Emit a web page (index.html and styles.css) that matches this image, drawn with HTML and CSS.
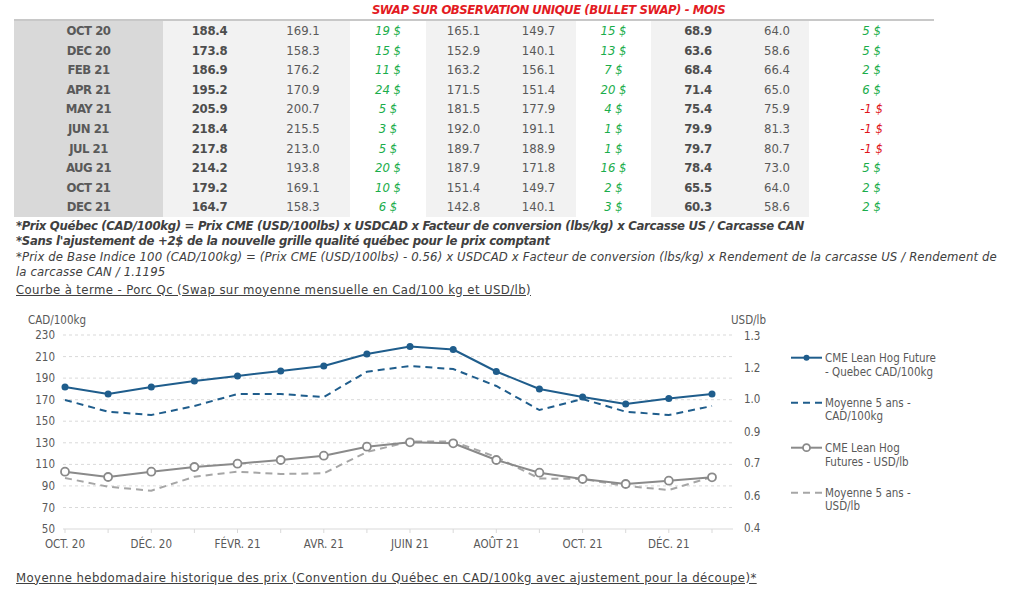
FILE: index.html
```html
<!DOCTYPE html>
<html lang="fr">
<head>
<meta charset="utf-8">
<title>Swap porc</title>
<link rel="stylesheet" href="styles.css">
</head>
<body>
<div class="page">
  <table class="swap">
    <colgroup>
      <col class="c-label"><col class="c-a"><col class="c-b"><col class="c-c"><col class="c-d"><col class="c-e"><col class="c-f"><col class="c-g"><col class="c-h"><col class="c-i">
    </colgroup>
    <thead>
      <tr><th></th><th colspan="9" class="title">SWAP SUR OBSERVATION UNIQUE (BULLET SWAP) - MOIS</th></tr>
    </thead>
    <tbody>
      <tr><td class="lbl">OCT 20</td><td class="b">188.4</td><td>169.1</td><td class="up">19 $</td><td>165.1</td><td>149.7</td><td class="up">15 $</td><td class="b">68.9</td><td>64.0</td><td class="up">5 $</td></tr>
      <tr><td class="lbl">DEC 20</td><td class="b">173.8</td><td>158.3</td><td class="up">15 $</td><td>152.9</td><td>140.1</td><td class="up">13 $</td><td class="b">63.6</td><td>58.6</td><td class="up">5 $</td></tr>
      <tr><td class="lbl">FEB 21</td><td class="b">186.9</td><td>176.2</td><td class="up">11 $</td><td>163.2</td><td>156.1</td><td class="up">7 $</td><td class="b">68.4</td><td>66.4</td><td class="up">2 $</td></tr>
      <tr><td class="lbl">APR 21</td><td class="b">195.2</td><td>170.9</td><td class="up">24 $</td><td>171.5</td><td>151.4</td><td class="up">20 $</td><td class="b">71.4</td><td>65.0</td><td class="up">6 $</td></tr>
      <tr><td class="lbl">MAY 21</td><td class="b">205.9</td><td>200.7</td><td class="up">5 $</td><td>181.5</td><td>177.9</td><td class="up">4 $</td><td class="b">75.4</td><td>75.9</td><td class="down">-1 $</td></tr>
      <tr><td class="lbl">JUN 21</td><td class="b">218.4</td><td>215.5</td><td class="up">3 $</td><td>192.0</td><td>191.1</td><td class="up">1 $</td><td class="b">79.9</td><td>81.3</td><td class="down">-1 $</td></tr>
      <tr><td class="lbl">JUL 21</td><td class="b">217.8</td><td>213.0</td><td class="up">5 $</td><td>189.7</td><td>188.9</td><td class="up">1 $</td><td class="b">79.7</td><td>80.7</td><td class="down">-1 $</td></tr>
      <tr><td class="lbl">AUG 21</td><td class="b">214.2</td><td>193.8</td><td class="up">20 $</td><td>187.9</td><td>171.8</td><td class="up">16 $</td><td class="b">78.4</td><td>73.0</td><td class="up">5 $</td></tr>
      <tr><td class="lbl">OCT 21</td><td class="b">179.2</td><td>169.1</td><td class="up">10 $</td><td>151.4</td><td>149.7</td><td class="up">2 $</td><td class="b">65.5</td><td>64.0</td><td class="up">2 $</td></tr>
      <tr><td class="lbl">DEC 21</td><td class="b">164.7</td><td>158.3</td><td class="up">6 $</td><td>142.8</td><td>140.1</td><td class="up">3 $</td><td class="b">60.3</td><td>58.6</td><td class="up">2 $</td></tr>
    </tbody>
  </table>

  <div class="notes">
    <p class="note strong">*Prix Québec (CAD/100kg) = Prix CME (USD/100lbs) x USDCAD x Facteur de conversion (lbs/kg) x Carcasse US / Carcasse CAN</p>
    <p class="note strong">*Sans l'ajustement de +2$ de la nouvelle grille qualité québec pour le prix comptant</p>
    <p class="note">*Prix de Base Indice 100 (CAD/100kg) = (Prix CME (USD/100lbs) - 0.56) x USDCAD x Facteur de conversion (lbs/kg) x Rendement de la carcasse US / Rendement de<br>la carcasse CAN / 1.1195</p>
    <p class="heading">Courbe à terme - Porc Qc (Swap sur moyenne mensuelle en Cad/100 kg et USD/lb)</p>
  </div>
</div>

<svg class="chart" width="1024" height="264" viewBox="0 0 1024 264" xmlns="http://www.w3.org/2000/svg">
  <g class="grid">
    <line x1="63" y1="35" x2="733" y2="35"/>
    <line x1="63" y1="56.6" x2="733" y2="56.6"/>
    <line x1="63" y1="78.1" x2="733" y2="78.1"/>
    <line x1="63" y1="99.7" x2="733" y2="99.7"/>
    <line x1="63" y1="121.2" x2="733" y2="121.2"/>
    <line x1="63" y1="142.8" x2="733" y2="142.8"/>
    <line x1="63" y1="164.4" x2="733" y2="164.4"/>
    <line x1="63" y1="185.9" x2="733" y2="185.9"/>
    <line x1="63" y1="207.5" x2="733" y2="207.5"/>
  </g>
  <g class="axis">
    <line x1="63" y1="229" x2="733" y2="229"/>
    <path d="M65 229v4M108.1 229v4M151.3 229v4M194.4 229v4M237.5 229v4M280.7 229v4M323.8 229v4M366.9 229v4M410 229v4M453.2 229v4M496.3 229v4M539.4 229v4M582.6 229v4M625.7 229v4M668.8 229v4M712 229v4"/>
  </g>
  <g class="lab">
    <text x="28" y="24">CAD/100kg</text>
    <text x="731" y="24">USD/lb</text>
  </g>
  <g class="lab" text-anchor="end">
    <text x="55" y="39">230</text>
    <text x="55" y="60.6">210</text>
    <text x="55" y="82.1">190</text>
    <text x="55" y="103.7">170</text>
    <text x="55" y="125.2">150</text>
    <text x="55" y="146.8">130</text>
    <text x="55" y="168.4">110</text>
    <text x="55" y="189.9">90</text>
    <text x="55" y="211.5">70</text>
    <text x="55" y="233">50</text>
  </g>
  <g class="lab">
    <text x="744" y="40">1.3</text>
    <text x="744" y="71.7">1.2</text>
    <text x="744" y="103.3">1.0</text>
    <text x="744" y="135.7">0.9</text>
    <text x="744" y="167.3">0.7</text>
    <text x="744" y="200">0.6</text>
    <text x="744" y="231.7">0.4</text>
  </g>
  <g class="lab" text-anchor="middle">
    <text x="65" y="248">OCT. 20</text>
    <text x="151.3" y="248">DÉC. 20</text>
    <text x="237.5" y="248">FÉVR. 21</text>
    <text x="323.8" y="248">AVR. 21</text>
    <text x="410" y="248">JUIN 21</text>
    <text x="496.3" y="248">AOÛT 21</text>
    <text x="582.6" y="248">OCT. 21</text>
    <text x="668.8" y="248">DÉC. 21</text>
  </g>

  <polyline class="s-grey-dash" points="65,178 108.1,186.7 151.3,190.7 194.4,176.7 237.5,171.7 280.7,174 323.8,173.3 366.9,152 410,141.5 453.2,141.5 496.3,157 539.4,178.5 582.6,179 625.7,186 668.8,190 712,177"/>
  <polyline class="s-grey" points="65,171.7 108.1,177 151.3,171.7 194.4,167 237.5,163.7 280.7,160 323.8,155.7 366.9,146.7 410,142.3 453.2,143.3 496.3,160 539.4,172.7 582.6,179 625.7,184 668.8,180.7 712,177.3"/>
  <g class="m-grey">
    <circle cx="65" cy="171.7" r="4"/><circle cx="108.1" cy="177" r="4"/><circle cx="151.3" cy="171.7" r="4"/><circle cx="194.4" cy="167" r="4"/>
    <circle cx="237.5" cy="163.7" r="4"/><circle cx="280.7" cy="160" r="4"/><circle cx="323.8" cy="155.7" r="4"/><circle cx="366.9" cy="146.7" r="4"/>
    <circle cx="410" cy="142.3" r="4"/><circle cx="453.2" cy="143.3" r="4"/><circle cx="496.3" cy="160" r="4"/><circle cx="539.4" cy="172.7" r="4"/>
    <circle cx="582.6" cy="179" r="4"/><circle cx="625.7" cy="184" r="4"/><circle cx="668.8" cy="180.7" r="4"/><circle cx="712" cy="177.3" r="4"/>
  </g>

  <polyline class="s-blue-dash" points="65,100 108.1,111.7 151.3,115 194.4,106 237.5,94 280.7,94 323.8,97 366.9,71.7 410,66 453.2,69 496.3,86 539.4,110 582.6,99 625.7,111.7 668.8,115 712,106"/>
  <polyline class="s-blue" points="65,87 108.1,94 151.3,87 194.4,81 237.5,76 280.7,71 323.8,66 366.9,54 410,46.5 453.2,49.5 496.3,71.5 539.4,89 582.6,97 625.7,104 668.8,98.5 712,94"/>
  <g class="m-blue">
    <circle cx="65" cy="87" r="3.5"/><circle cx="108.1" cy="94" r="3.5"/><circle cx="151.3" cy="87" r="3.5"/><circle cx="194.4" cy="81" r="3.5"/>
    <circle cx="237.5" cy="76" r="3.5"/><circle cx="280.7" cy="71" r="3.5"/><circle cx="323.8" cy="66" r="3.5"/><circle cx="366.9" cy="54" r="3.5"/>
    <circle cx="410" cy="46.5" r="3.5"/><circle cx="453.2" cy="49.5" r="3.5"/><circle cx="496.3" cy="71.5" r="3.5"/><circle cx="539.4" cy="89" r="3.5"/>
    <circle cx="582.6" cy="97" r="3.5"/><circle cx="625.7" cy="104" r="3.5"/><circle cx="668.8" cy="98.5" r="3.5"/><circle cx="712" cy="94" r="3.5"/>
  </g>

  <g class="legend">
    <line class="s-blue" x1="791" y1="57.7" x2="822" y2="57.7"/>
    <circle class="m-blue-one" cx="806.5" cy="57.7" r="3"/>
    <text x="825" y="61.5">CME Lean Hog Future</text>
    <text x="825" y="75.5">- Quebec CAD/100kg</text>

    <line class="s-blue-dash" x1="791" y1="102.7" x2="822" y2="102.7"/>
    <text x="825" y="106.5">Moyenne 5 ans -</text>
    <text x="825" y="120">CAD/100kg</text>

    <line class="s-grey" x1="791" y1="147.7" x2="822" y2="147.7"/>
    <circle class="m-grey-one" cx="806.5" cy="147.7" r="3.5"/>
    <text x="825" y="151.5">CME Lean Hog</text>
    <text x="825" y="165.5">Futures - USD/lb</text>

    <line class="s-grey-dash" x1="791" y1="192.7" x2="822" y2="192.7"/>
    <text x="825" y="196.5">Moyenne 5 ans -</text>
    <text x="825" y="210">USD/lb</text>
  </g>
</svg>

<p class="footer-title">Moyenne hebdomadaire historique des prix (Convention du Québec en CAD/100kg avec ajustement pour la découpe)*</p>
</body>
</html>
```

FILE: styles.css
```css
* { box-sizing: border-box; }
html, body { margin: 0; padding: 0; background: #ffffff; }
body {
  width: 1024px;
  height: 591px;
  overflow: hidden;
  font-family: "DejaVu Sans Condensed", "DejaVu Sans", sans-serif;
  font-stretch: condensed;
  color: #404040;
}
.page { padding-left: 14px; }

.swap {
  border-collapse: separate;
  border-spacing: 0;
  table-layout: fixed;
  width: 920px;
  font-size: 13px;
}
.swap col.c-label { width: 149px; background: #d9d9d9; }
.swap col.c-a { width: 93px; background: #f2f2f2; }
.swap col.c-b { width: 94px; background: #f2f2f2; }
.swap col.c-c { width: 76px; background: #ffffff; }
.swap col.c-d { width: 75px; background: #f2f2f2; }
.swap col.c-e { width: 75px; background: #f2f2f2; }
.swap col.c-f { width: 75px; background: #ffffff; }
.swap col.c-g { width: 94px; background: #f2f2f2; }
.swap col.c-h { width: 64px; background: #f2f2f2; }
.swap col.c-i { width: 125px; background: #ffffff; }

.swap thead th {
  background: #ffffff;
  padding: 0;
  height: 21px;
  line-height: 19px;
  border-bottom: 2px solid #c8c8c8;
  vertical-align: top;
}
.swap .title {
  color: #e31b23;
  font-weight: bold;
  font-style: italic;
  letter-spacing: -0.45px;
  text-align: center;
}
.swap td {
  padding: 0;
  height: 19.6px;
  line-height: 19.6px;
  text-align: center;
  color: #595959;
  white-space: nowrap;
}
.swap td.lbl { font-weight: bold; color: #595959; letter-spacing: -0.5px; }
.swap td.b { font-weight: bold; color: #4d4d4d; letter-spacing: -0.3px; }
.swap td.up { color: #1aad4b; font-style: italic; }
.swap td.down { color: #e0141c; font-style: italic; }

.notes { padding-left: 2px; padding-top: 1px; font-size: 13px; }
.note { margin: 0; line-height: 15.4px; font-style: italic; color: #404040; letter-spacing: 0.12px; }
.note.strong { font-weight: bold; letter-spacing: -0.3px; }
.heading {
  margin: 2px 0 0 0;
  line-height: 16px;
  letter-spacing: 0.4px;
  text-decoration: underline;
  color: #404040;
}

.chart { display: block; margin-top: 2px; }
.chart .grid line { stroke: #d9d9d9; stroke-width: 1; stroke-dasharray: 3 3; }
.chart .axis line, .chart .axis path { stroke: #d9d9d9; stroke-width: 1; fill: none; }
.chart .lab text, .chart .lab { font-size: 11.5px; fill: #595959; font-family: "DejaVu Sans Condensed", "DejaVu Sans", sans-serif; font-stretch: condensed; }
.chart .s-blue { fill: none; stroke: #1f5d8c; stroke-width: 2; stroke-linejoin: round; }
.chart .s-blue-dash { fill: none; stroke: #1f5d8c; stroke-width: 2; stroke-dasharray: 7 5; }
.chart .s-grey { fill: none; stroke: #8a8a8a; stroke-width: 2; stroke-linejoin: round; }
.chart .s-grey-dash { fill: none; stroke: #a6a6a6; stroke-width: 2; stroke-dasharray: 7 5; }
.chart .m-blue circle, .chart .m-blue-one { fill: #1f5d8c; stroke: none; }
.chart .m-grey circle, .chart .m-grey-one { fill: #ffffff; stroke: #8a8a8a; stroke-width: 1.8; }
.chart .legend text { font-size: 11.5px; fill: #595959; font-family: "DejaVu Sans Condensed", "DejaVu Sans", sans-serif; font-stretch: condensed; }

.footer-title {
  margin: 6px 0 0 16px;
  font-size: 13px;
  line-height: 16px;
  letter-spacing: 0.42px;
  text-decoration: underline;
  color: #404040;
}
```
